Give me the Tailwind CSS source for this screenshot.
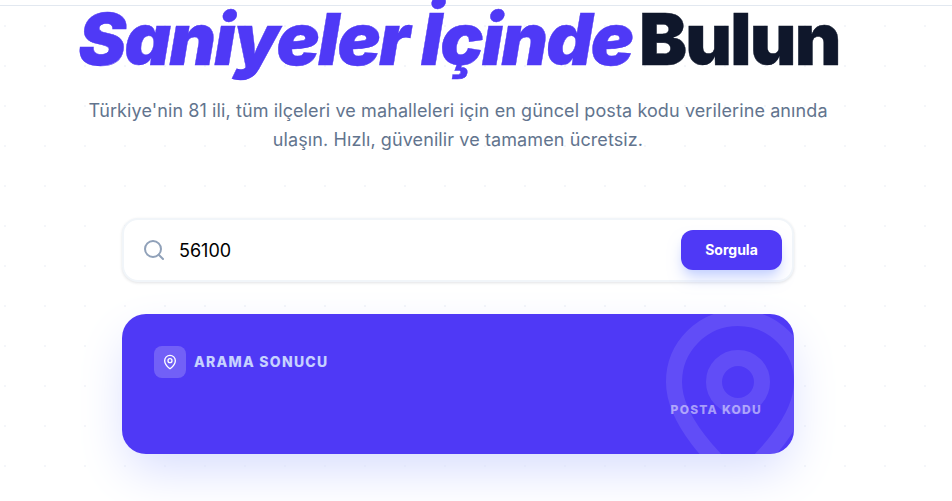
<!DOCTYPE html>
<html lang="tr">
<head>
  <meta charset="UTF-8">
  <meta name="viewport" content="width=device-width, initial-scale=1.0">
  <title>Posta Kodu Sorgulama</title>
  <script src="https://cdn.jsdelivr.net/npm/@tailwindcss/browser@4"></script>
</head>
<body class="h-[501px] overflow-hidden bg-white bg-[radial-gradient(#f4f6fa_1px,transparent_1px)] bg-[size:40px_40px] bg-[position:-15px_6px] font-['Inter',sans-serif]">
  <!-- Nav bottom edge -->
  <div class="h-[6px] border-b border-[#e2e8f0]"></div>

  <main class="w-[916px] flex flex-col items-center">
    <h1 class="h-[72px] -mt-[3px] ml-[2px] text-[72px] leading-[72px] font-black tracking-[-0.025em] text-slate-900 whitespace-nowrap [-webkit-text-stroke:0.4px_currentColor]">
      <span class="italic text-indigo-600">Saniyeler İçinde</span> <span class="-ml-[6px]">Bulun</span>
    </h1>

    <p class="mt-[21px] w-[768px] text-center text-lg leading-[29.25px] tracking-[0.1px] text-slate-500">
      Türkiye'nin 81 ili, tüm ilçeleri ve mahalleleri için en güncel posta kodu verilerine anında ulaşın. Hızlı, güvenilir ve tamamen ücretsiz.
    </p>

    <!-- Search -->
    <div class="mt-[63px] w-[672px] h-[64px] flex items-center pl-[18px] pr-[10px] bg-white border-2 border-slate-100 rounded-2xl shadow-[0_1px_3px_rgba(15,23,42,0.12)]">
      <svg class="w-6 h-6 text-slate-400 shrink-0" viewBox="0 0 24 24" fill="none" stroke="currentColor" stroke-width="2" stroke-linecap="round" stroke-linejoin="round">
        <circle cx="11" cy="11" r="8"></circle>
        <path d="m21 21-4.3-4.3"></path>
      </svg>
      <div class="ml-[13px] pt-[2px] flex-1 text-lg font-normal text-black">56100</div>
      <button class="w-[101px] h-[40px] rounded-xl bg-indigo-600 text-sm font-bold text-white shadow-lg shadow-indigo-200">Sorgula</button>
    </div>

    <!-- Result card -->
    <section class="relative mt-[32px] w-[672px] h-[140px] p-8 overflow-hidden rounded-3xl bg-indigo-600 shadow-[0_20px_50px_-6px_#d5dbfe]">
      <svg class="absolute -top-3 -right-10 w-48 h-48 text-white/10" viewBox="0 0 24 24" fill="none" stroke="currentColor" stroke-width="2" stroke-linecap="round" stroke-linejoin="round">
        <path d="M20 10c0 4.993-5.539 10.193-7.399 11.799a1 1 0 0 1-1.202 0C9.539 20.193 4 14.993 4 10a8 8 0 0 1 16 0"></path>
        <circle cx="12" cy="10" r="3"></circle>
      </svg>
      <div class="relative flex items-center gap-2">
        <div class="w-8 h-8 flex items-center justify-center rounded-lg bg-white/20">
          <svg class="w-4 h-4 text-white" viewBox="0 0 24 24" fill="none" stroke="currentColor" stroke-width="2" stroke-linecap="round" stroke-linejoin="round">
            <path d="M20 10c0 4.993-5.539 10.193-7.399 11.799a1 1 0 0 1-1.202 0C9.539 20.193 4 14.993 4 10a8 8 0 0 1 16 0"></path>
            <circle cx="12" cy="10" r="3"></circle>
          </svg>
        </div>
        <span class="text-sm font-extrabold tracking-[1.25px] text-indigo-200">ARAMA SONUCU</span>
      </div>
      <div class="relative mt-[24px] text-right text-xs font-extrabold tracking-[1.25px] text-white/50">POSTA KODU</div>
    </section>
  </main>
</body>
</html>
